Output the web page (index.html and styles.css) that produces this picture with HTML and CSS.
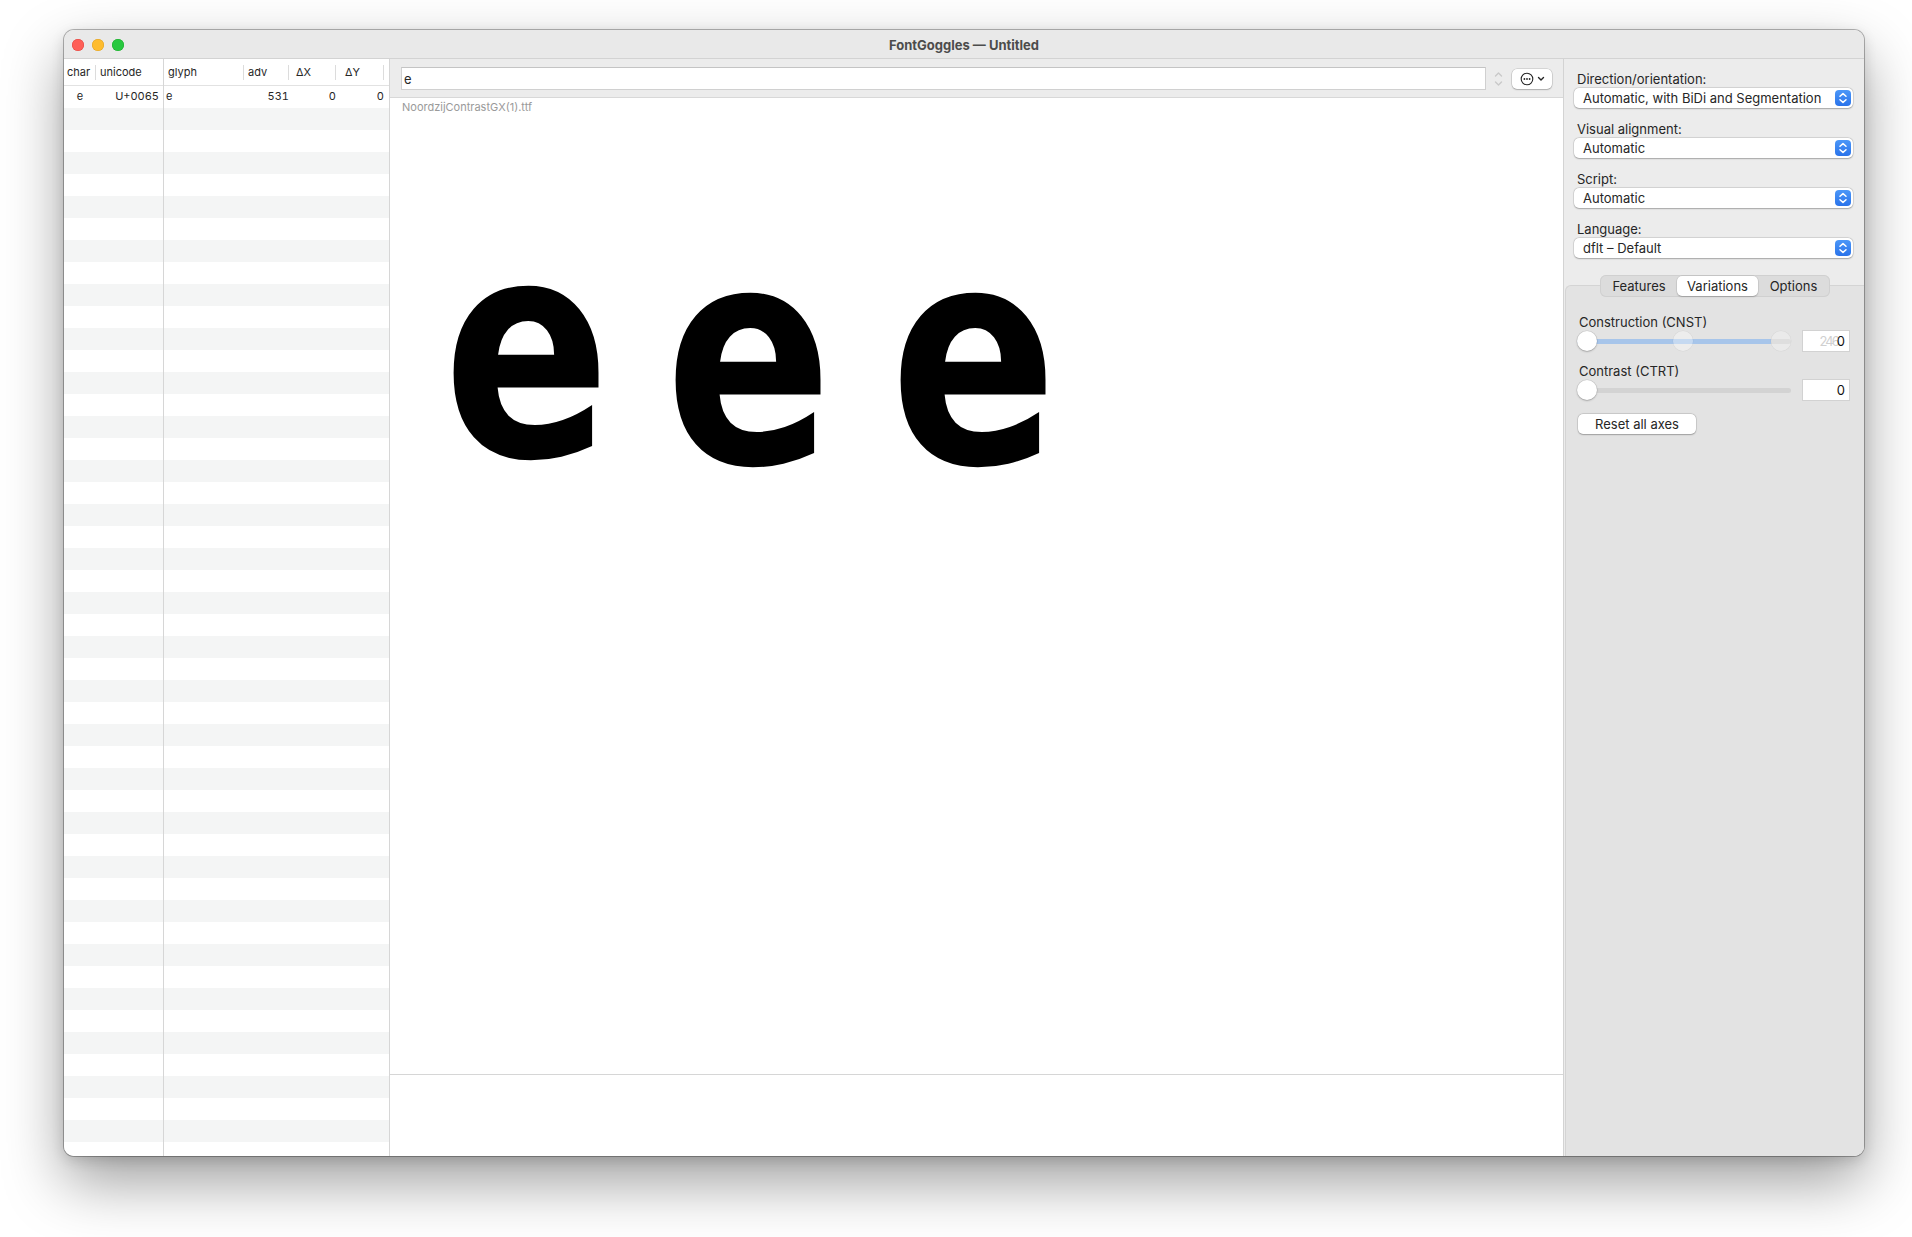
FILE: index.html
```html
<!DOCTYPE html>
<html>
<head>
<meta charset="utf-8">
<title>FontGoggles — Untitled</title>
<link rel="stylesheet" href="styles.css">
</head>
<body>
<div class="desktop">
  <div class="window">
    <div class="titlebar">
      <div class="lights">
        <span class="light red"></span>
        <span class="light yellow"></span>
        <span class="light green"></span>
      </div>
      <div class="title">FontGoggles — Untitled</div>
      <div></div>
    </div>
    <div class="main">
      <div class="glyphlist">
        <div class="pane pane-left">
          <div class="thead">
            <div class="hcell c-char"><span class="htext">char</span><span class="hsep"></span></div>
            <div class="hcell c-uni"><span class="htext">unicode</span></div>
          </div>
          <div class="tbody">
            <div class="row">
              <div class="cell c-char center">e</div>
              <div class="cell c-uni right">U+0065</div>
            </div>
          </div>
        </div>
        <div class="pane pane-right">
          <div class="thead">
            <div class="hcell c-glyph"><span class="htext">glyph</span><span class="hsep"></span></div>
            <div class="hcell c-adv"><span class="htext">adv</span><span class="hsep"></span></div>
            <div class="hcell c-dx"><span class="htext">ΔX</span><span class="hsep"></span></div>
            <div class="hcell c-dy"><span class="htext">ΔY</span><span class="hsep"></span></div>
          </div>
          <div class="tbody">
            <div class="row">
              <div class="cell c-glyph">e</div>
              <div class="cell c-adv right">531</div>
              <div class="cell c-dx right">0</div>
              <div class="cell c-dy right">0</div>
            </div>
          </div>
        </div>
      </div>

      <div class="center">
        <div class="toolbar">
          <div class="textfield">e</div>
          <div class="stepper">
            <svg width="11" height="22" viewBox="0 0 11 22"><path d="M2.5 8 L5.5 5 L8.5 8" fill="none" stroke="#c9c9c9" stroke-width="1.4" stroke-linecap="round" stroke-linejoin="round"/><path d="M2.5 14 L5.5 17 L8.5 14" fill="none" stroke="#c9c9c9" stroke-width="1.4" stroke-linecap="round" stroke-linejoin="round"/></svg>
          </div>
          <div class="menubutton">
            <svg width="30" height="16" viewBox="0 0 30 16"><circle cx="8" cy="8" r="5.8" fill="none" stroke="#262626" stroke-width="1.1"/><circle cx="5.4" cy="8" r="0.9" fill="#262626"/><circle cx="8" cy="8" r="0.9" fill="#262626"/><circle cx="10.6" cy="8" r="0.9" fill="#262626"/><path d="M19.5 6.5 L22 9 L24.5 6.5" fill="none" stroke="#262626" stroke-width="1.4" stroke-linecap="round" stroke-linejoin="round"/></svg>
          </div>
        </div>
        <div class="canvas">
          <div class="fontname">NoordzijContrastGX(1).ttf</div>
          <div class="glyphs">
            <span class="g g1">e</span>
            <span class="g g2">e</span>
            <span class="g g3">e</span>
          </div>
        </div>
        <div class="bottompane"></div>
      </div>

      <div class="sidebar">
        <div class="props">
          <div class="group">
            <div class="label">Direction/orientation:</div>
            <div class="popup"><span>Automatic, with BiDi and Segmentation</span><span class="arrows"><svg width="16" height="16" viewBox="0 0 16 16"><path d="M5 6.3 L8 3.6 L11 6.3" fill="none" stroke="#fff" stroke-width="1.5" stroke-linecap="round" stroke-linejoin="round"/><path d="M5 9.7 L8 12.4 L11 9.7" fill="none" stroke="#fff" stroke-width="1.5" stroke-linecap="round" stroke-linejoin="round"/></svg></span></div>
          </div>
          <div class="group">
            <div class="label">Visual alignment:</div>
            <div class="popup"><span>Automatic</span><span class="arrows"><svg width="16" height="16" viewBox="0 0 16 16"><path d="M5 6.3 L8 3.6 L11 6.3" fill="none" stroke="#fff" stroke-width="1.5" stroke-linecap="round" stroke-linejoin="round"/><path d="M5 9.7 L8 12.4 L11 9.7" fill="none" stroke="#fff" stroke-width="1.5" stroke-linecap="round" stroke-linejoin="round"/></svg></span></div>
          </div>
          <div class="group">
            <div class="label">Script:</div>
            <div class="popup"><span>Automatic</span><span class="arrows"><svg width="16" height="16" viewBox="0 0 16 16"><path d="M5 6.3 L8 3.6 L11 6.3" fill="none" stroke="#fff" stroke-width="1.5" stroke-linecap="round" stroke-linejoin="round"/><path d="M5 9.7 L8 12.4 L11 9.7" fill="none" stroke="#fff" stroke-width="1.5" stroke-linecap="round" stroke-linejoin="round"/></svg></span></div>
          </div>
          <div class="group">
            <div class="label">Language:</div>
            <div class="popup"><span>dflt – Default</span><span class="arrows"><svg width="16" height="16" viewBox="0 0 16 16"><path d="M5 6.3 L8 3.6 L11 6.3" fill="none" stroke="#fff" stroke-width="1.5" stroke-linecap="round" stroke-linejoin="round"/><path d="M5 9.7 L8 12.4 L11 9.7" fill="none" stroke="#fff" stroke-width="1.5" stroke-linecap="round" stroke-linejoin="round"/></svg></span></div>
          </div>
        </div>
        <div class="tabview">
          <div class="segmented">
            <div class="seg">Features</div>
            <div class="seg active">Variations</div>
            <div class="seg">Options</div>
          </div>
          <div class="tabcontent">
            <div class="axis">
              <div class="axislabel">Construction (CNST)</div>
              <div class="axisrow">
                <div class="slider">
                  <div class="track"><div class="fill" style="width: 194px"></div></div>
                  <div class="knob-row">
                    <span class="knob"></span>
                    <span class="knob ghost" style="margin-left: 76px"></span>
                    <span class="knob ghost faint" style="margin-left: 78px"></span>
                  </div>
                </div>
                <div class="valuefield"><span class="ghosttext">246</span>0</div>
              </div>
            </div>
            <div class="axis">
              <div class="axislabel">Contrast (CTRT)</div>
              <div class="axisrow">
                <div class="slider">
                  <div class="track"></div>
                  <div class="knob-row">
                    <span class="knob"></span>
                  </div>
                </div>
                <div class="valuefield">0</div>
              </div>
            </div>
            <div class="resetbtn">Reset all axes</div>
          </div>
        </div>
      </div>
    </div>
  </div>
</div>
</body>
</html>
```

FILE: styles.css
```css
* { box-sizing: border-box; }

html, body {
  margin: 0;
  padding: 0;
  background: #ffffff;
  font-family: Inter, "Liberation Sans", "DejaVu Sans", sans-serif;
  color: #262626;
}

.desktop {
  width: 1912px;
  height: 1237px;
  padding: 30px 0 0 64px;
}

.window {
  width: 1800px;
  height: 1126px;
  border-radius: 10px;
  overflow: hidden;
  background: #ffffff;
  box-shadow: 0 0 0 1px rgba(0, 0, 0, 0.28), 0 26px 60px rgba(0, 0, 0, 0.38), 0 4px 14px rgba(0, 0, 0, 0.14);
  display: flex;
  flex-direction: column;
}

/* Title bar */
.titlebar {
  height: 29px;
  flex: none;
  background: #e9e9e9;
  border-bottom: 1px solid #d3d3d3;
  display: grid;
  grid-template-columns: 1fr auto 1fr;
  align-items: center;
}

.lights {
  display: flex;
  gap: 8px;
  padding-left: 8px;
  padding-top: 1px;
}

.light {
  width: 12px;
  height: 12px;
  border-radius: 50%;
  display: block;
}
.red { background: #fe5f57; box-shadow: inset 0 0 0 0.5px #e0443e; }
.yellow { background: #febc2e; box-shadow: inset 0 0 0 0.5px #dea123; }
.green { background: #28c840; box-shadow: inset 0 0 0 0.5px #1aab29; }

.title {
  font-size: 13px;
  font-weight: 700;
  color: #4c4c4c;
  padding-top: 1px;
}

.main {
  flex: 1;
  display: flex;
  min-height: 0;
}

/* Glyph list */
.glyphlist {
  width: 326px;
  flex: none;
  border-right: 1px solid #d6d6d6;
  display: flex;
  font-size: 11px;
}

.pane {
  display: flex;
  flex-direction: column;
}
.pane-left {
  width: 100px;
  border-right: 1px solid #d6d6d6;
}
.pane-right {
  width: 225px;
}

.thead {
  height: 27px;
  flex: none;
  border-bottom: 1px solid #e2e2e2;
  display: flex;
  align-items: center;
  background: #ffffff;
}

.hcell {
  display: flex;
  align-items: center;
  height: 100%;
}
.htext { flex: 1; }
.hsep {
  width: 1px;
  height: 15px;
  background: #dcdcdc;
}

.c-char { width: 32px; }
.c-uni { width: 67px; }
.c-glyph { width: 80px; }
.c-adv { width: 48px; }
.c-dx { width: 48px; }
.c-dy { width: 49px; }

.pane-left .c-char .htext { padding-left: 3px; }
.pane-left .c-uni .htext { padding-left: 4px; }
.pane-right .c-glyph .htext { padding-left: 2px; }
.pane-right .c-adv .htext { padding-left: 4px; }
.pane-right .c-dx .htext { padding-left: 4px; }
.pane-right .c-dy .htext { padding-left: 5px; }

.tbody {
  flex: 1;
  background: repeating-linear-gradient(to bottom, #ffffff 0, #ffffff 22px, #f4f5f5 22px, #f4f5f5 44px);
}

.row {
  height: 22px;
  display: flex;
  align-items: center;
  padding-bottom: 3px;
}
.cell {
  white-space: nowrap;
  font-feature-settings: "tnum";
}
.cell.center { text-align: center; padding-left: 0; }
.cell.right { text-align: right; }
.pane-left .c-uni { padding-right: 4px; }
.pane-right .c-glyph { padding-left: 2px; }
.pane-right .c-adv { padding-right: 3px; }
.pane-right .c-dx { padding-right: 4px; }
.pane-right .c-dy { padding-right: 5px; }

/* Center */
.center {
  flex: 1;
  display: flex;
  flex-direction: column;
  min-width: 0;
}

.toolbar {
  height: 39px;
  flex: none;
  background: #ececec;
  border-bottom: 1px solid #d8d8d8;
  display: flex;
  align-items: center;
  padding: 1px 11px 0 11px;
}

.textfield {
  flex: 1;
  height: 23px;
  background: #ffffff;
  border: 1px solid #d0d0d0;
  border-top-color: #c4c4c4;
  font-size: 13px;
  line-height: 22px;
  padding-left: 2px;
}

.stepper {
  width: 11px;
  height: 22px;
  margin-left: 7px;
  display: flex;
}

.menubutton {
  width: 40px;
  height: 20px;
  margin-left: 8px;
  background: #ffffff;
  border-radius: 5px;
  box-shadow: 0 0 0 0.5px rgba(0, 0, 0, 0.18), 0 1px 1.5px rgba(0, 0, 0, 0.2);
  display: flex;
  align-items: center;
  justify-content: center;
  padding-left: 4px;
}

.canvas {
  flex: 1;
  background: #ffffff;
}

.fontname {
  font-size: 11px;
  line-height: 14px;
  color: #9a9a9a;
  padding: 2px 0 0 12px;
}

.glyphs {
  display: flex;
  align-items: flex-start;
  padding-left: 53px;
  margin-top: 85px;
}

.g {
  display: inline-block;
  font-family: "DejaVu Sans", sans-serif;
  font-weight: 700;
  font-size: 304px;
  line-height: 1;
  color: #000;
  transform: scaleX(0.812);
  transform-origin: left top;
}
.g1 { width: 222px; }
.g2 { width: 225px; margin-top: 7px; }
.g3 { width: 225px; margin-top: 7px; }

.bottompane {
  height: 82px;
  flex: none;
  border-top: 1px solid #d6d6d6;
  background: #ffffff;
}

/* Sidebar */
.sidebar {
  width: 301px;
  flex: none;
  border-left: 1px solid #d3d3d3;
  background: #ececec;
  display: flex;
  flex-direction: column;
  font-size: 13px;
}

.props {
  padding: 12px 11px 0 10px;
  display: flex;
  flex-direction: column;
  gap: 13px;
}

.label {
  height: 16px;
  line-height: 16px;
  padding-left: 3px;
  margin-bottom: 1px;
  color: #262626;
}

.popup {
  height: 20px;
  background: #ffffff;
  border-radius: 5px;
  box-shadow: 0 0 0 0.5px rgba(0, 0, 0, 0.12), 0 0.5px 1.5px rgba(0, 0, 0, 0.25);
  display: flex;
  align-items: center;
  justify-content: space-between;
  padding: 0 2px 0 9px;
  color: #262626;
}

.arrows {
  width: 16px;
  height: 16px;
  border-radius: 4px;
  background: linear-gradient(to bottom, #4b97f8, #2a73ea);
  display: flex;
}

.tabview {
  flex: 1;
  margin: 27px 0 0 1px;
  border: 1px solid #d4d4d4;
  border-bottom: none;
  border-right: none;
  border-radius: 6px 0 0 0;
  background: #e3e3e3;
  display: flex;
  flex-direction: column;
  align-items: center;
}

.segmented {
  margin-top: -11px;
  height: 22px;
  width: 230px;
  display: flex;
  background: #dcdcdc;
  border-radius: 6px;
  box-shadow: inset 0 0 0 1px #d0d0d0;
  padding: 1px;
}

.seg {
  display: flex;
  align-items: center;
  justify-content: center;
  color: #262626;
  height: 20px;
}
.seg:nth-child(1) { width: 76px; }
.seg:nth-child(2) { width: 81px; }
.seg:nth-child(3) { width: 71px; }
.seg.active {
  background: #ffffff;
  border-radius: 5px;
  box-shadow: 0 0 0 0.5px rgba(0, 0, 0, 0.1), 0 1px 1.5px rgba(0, 0, 0, 0.2);
}

.tabcontent {
  align-self: stretch;
  padding: 17px 13px 0 11px;
  display: flex;
  flex-direction: column;
}

.axis {
  display: flex;
  flex-direction: column;
  margin-bottom: 11px;
}

.axislabel {
  height: 16px;
  line-height: 16px;
  padding-left: 2px;
}

.axisrow {
  height: 22px;
  display: flex;
  align-items: center;
  gap: 11px;
}

.slider {
  width: 214px;
  height: 22px;
  display: grid;
  align-items: center;
}
.slider > * { grid-area: 1 / 1; }

.track {
  height: 5px;
  border-radius: 3px;
  background: #d3d3d3;
  overflow: hidden;
}
.fill {
  height: 100%;
  background: #a7c5ea;
}

.knob-row {
  display: flex;
  align-items: center;
}

.knob {
  width: 20px;
  height: 20px;
  border-radius: 50%;
  background: #ffffff;
  box-shadow: 0 0 0 0.5px rgba(0, 0, 0, 0.12), 0 1px 2px rgba(0, 0, 0, 0.22);
  display: block;
}
.knob.ghost {
  background: rgba(255, 255, 255, 0.35);
  box-shadow: 0 0 0 0.5px rgba(0, 0, 0, 0.05);
}
.knob.faint {
  background: rgba(255, 255, 255, 0.25);
}

.valuefield {
  width: 48px;
  height: 22px;
  background: #ffffff;
  border: 1px solid #d2d2d2;
  text-align: right;
  padding-right: 4px;
  line-height: 20px;
  color: #111;
}
.ghosttext {
  color: #d0d0d0;
  letter-spacing: -2px;
  margin-right: -1px;
}

.resetbtn {
  width: 118px;
  height: 20px;
  margin: 2px 0 0 1px;
  background: #ffffff;
  border-radius: 5px;
  box-shadow: 0 0 0 0.5px rgba(0, 0, 0, 0.14), 0 0.5px 1.5px rgba(0, 0, 0, 0.25);
  display: flex;
  align-items: center;
  justify-content: center;
  color: #262626;
}
```
